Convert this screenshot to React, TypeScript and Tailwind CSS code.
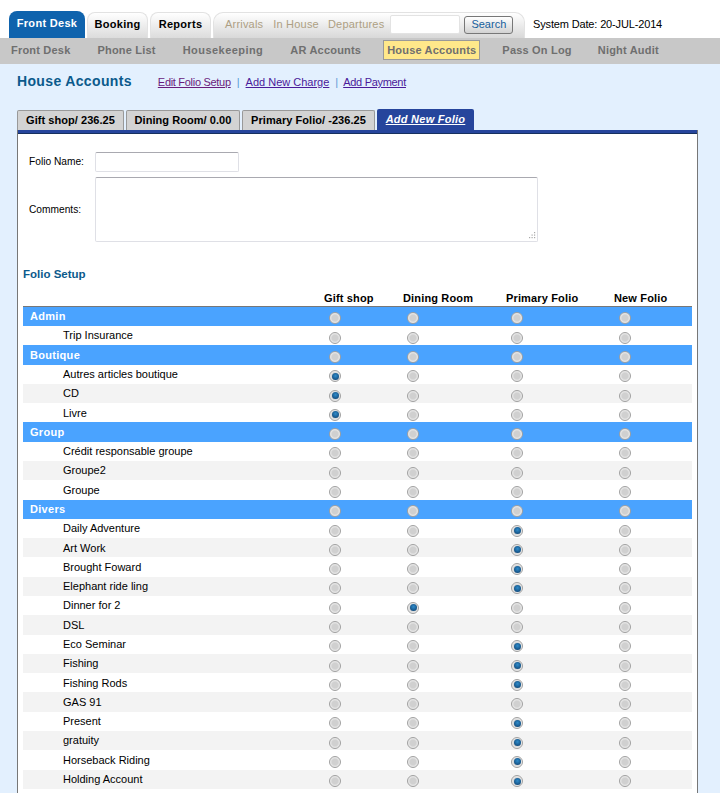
const font = "font-['Liberation_Sans',Arial,sans-serif]";

type Row = { name: string; group?: boolean; pick?: number };

const rows: Row[] = [
  { name: "Admin", group: true },
  { name: "Trip Insurance" },
  { name: "Boutique", group: true },
  { name: "Autres articles boutique", pick: 0 },
  { name: "CD", pick: 0 },
  { name: "Livre", pick: 0 },
  { name: "Group", group: true },
  { name: "Crédit responsable groupe" },
  { name: "Groupe2" },
  { name: "Groupe" },
  { name: "Divers", group: true },
  { name: "Daily Adventure", pick: 2 },
  { name: "Art Work", pick: 2 },
  { name: "Brought Foward", pick: 2 },
  { name: "Elephant ride ling", pick: 2 },
  { name: "Dinner for 2", pick: 1 },
  { name: "DSL" },
  { name: "Eco Seminar", pick: 2 },
  { name: "Fishing", pick: 2 },
  { name: "Fishing Rods", pick: 2 },
  { name: "GAS 91" },
  { name: "Present", pick: 2 },
  { name: "gratuity", pick: 2 },
  { name: "Horseback Riding", pick: 2 },
  { name: "Holding Account", pick: 2 },
];

const cols = "grid grid-cols-[301px_79px_103px_108px_78px]";

const folioTabs = [
  { label: "Gift shop/ 236.25", width: "w-[107px]" },
  { label: "Dining Room/ 0.00", width: "w-[114px]" },
  { label: "Primary Folio/ -236.25", width: "w-[133px]" },
];

function Radio({ on, col }: { on?: boolean; col: number }) {
  return (
    <span
      className={`mt-[4px] flex size-[12px] items-center justify-center rounded-full border border-[#a0a0a0] bg-[radial-gradient(circle,#d0d0d0_40%,#f6f6f6_80%)] ${
        col === 1 ? "ml-[4px]" : "ml-[5px]"
      }`}
    >
      {on && <span className="size-[7px] rounded-full bg-[radial-gradient(circle_at_50%_40%,#2f8ccb,#0a3a68)]" />}
    </span>
  );
}

export default function App() {
  let stripe = 0;
  return (
    <div className={`${font} flex h-[793px] w-[720px] flex-col overflow-hidden bg-white text-[11px] text-black`}>
      {/* Top tabs */}
      <div className="flex h-[38px] shrink-0 items-end pl-[9px]">
        <div className="flex h-[27px] w-[76px] items-center justify-center rounded-t-[8px] bg-[#0f63ad] pb-[2px] font-bold tracking-[0.3px] text-white">
          Front Desk
        </div>
        <div className="ml-[2px] flex h-[26px] w-[61px] items-center justify-center rounded-t-[8px] border border-b-0 border-[#e2e2e2] bg-gradient-to-b from-white to-[#dcdcdc] pb-[2px] font-bold tracking-[0.3px]">
          Booking
        </div>
        <div className="ml-[2px] flex h-[26px] w-[61px] items-center justify-center rounded-t-[8px] border border-b-0 border-[#e2e2e2] bg-gradient-to-b from-white to-[#dcdcdc] pb-[2px] font-bold tracking-[0.3px]">
          Reports
        </div>
        <div className="ml-[2px] flex h-[26px] w-[312px] items-center rounded-t-[10px] border border-b-0 border-[#e2e2e2] bg-gradient-to-b from-white to-[#d8d8d8] pb-[2px] pl-[11px] tracking-[0.2px] text-[#ad9f83]">
          <span>Arrivals</span>
          <span className="ml-[10px]">In House</span>
          <span className="ml-[9px]">Departures</span>
          <span className="ml-[6px] h-[19px] w-[70px] rounded-[2px] border border-[#e3e3e3] bg-white" />
          <span className="ml-[4px] flex h-[18px] w-[49px] items-center justify-center rounded-[3px] border border-[#777] bg-gradient-to-b from-white to-[#d2d2d2] tracking-normal text-[#17609c]">
            Search
          </span>
        </div>
        <div className="ml-[8px] h-[25px] leading-[22px] tracking-[-0.15px]">System Date: 20-JUL-2014</div>
      </div>

      {/* Sub nav */}
      <div className="flex h-[26px] shrink-0 items-center bg-[#c8c8c8] pb-[2px] pl-[11px] font-bold tracking-[0.2px] text-[#6f6f6f]">
        <span>Front Desk</span>
        <span className="ml-[27px]">Phone List</span>
        <span className="ml-[27px] tracking-[0.45px]">Housekeeping</span>
        <span className="ml-[27px]">AR Accounts</span>
        <span className="ml-[22px] border border-[#999] bg-[#ffe88a] px-[3px] py-[1px]">House Accounts</span>
        <span className="ml-[22px]">Pass On Log</span>
        <span className="ml-[26px]">Night Audit</span>
      </div>

      {/* Page body */}
      <div className="flex-1 bg-[#e3f0fe] pl-[17px] pr-[22px]">
        <div className="flex h-[46px] items-start pt-[7px]">
          <h1 className="text-[14px] font-bold tracking-[0.35px] text-[#0b5a8c]">House Accounts</h1>
          <div className="ml-[26px] mt-[3px] flex">
            <a href="#" className="tracking-[-0.3px] text-[#6a1b7c] underline">Edit Folio Setup</a>
            <span className="mx-[6px] text-[#5a9bd5]">|</span>
            <a href="#" className="text-[#4a1a9a] underline">Add New Charge</a>
            <span className="ml-[6px] mr-[5px] text-[#5a9bd5]">|</span>
            <a href="#" className="tracking-[-0.3px] text-[#4a1a9a] underline">Add Payment</a>
          </div>
        </div>

        {/* Folio tabs */}
        <div className="flex h-[20px] items-end">
          {folioTabs.map((t) => (
            <div
              key={t.label}
              className={`${t.width} mr-[2px] flex h-[20px] items-center justify-center rounded-t-[2px] border border-b-0 border-[#999] bg-[#d3d3d3] font-bold tracking-[0.05px]`}
            >
              {t.label}
            </div>
          ))}
          <div className="flex h-[21px] w-[97px] items-center justify-center rounded-t-[2px] bg-[#26459c] font-bold italic tracking-[0.25px] text-white underline">
            Add New Folio
          </div>
        </div>

        {/* Panel */}
        <div className="h-full border-x border-[#777] bg-white">
          <div className="h-[4px] border-b border-[#16305f] bg-[#26459c]" />
          <div className="px-[5px]">
            <div className="flex items-center pl-[6px] pt-[18px]">
              <span className="w-[66px] text-[10.2px]">Folio Name:</span>
              <span className="h-[20px] w-[144px] rounded-[2px] border border-[#dfe0e6] border-t-[#a9a9b0] bg-white" />
            </div>
            <div className="mt-[5px] flex h-[65px] items-center pl-[6px]">
              <span className="w-[66px] text-[10.2px]">Comments:</span>
              <div className="relative h-[65px] w-[443px]">
                <textarea className="block size-full resize-none rounded-[2px] border border-[#dfe0e6] border-t-[#a9a9b0] bg-white outline-none" />
                <svg className="pointer-events-none absolute bottom-[2px] right-[2px]" width="9" height="9" viewBox="0 0 9 9" fill="#a8a8a8">
                  <rect x="7" y="1" width="1.2" height="1.2" />
                  <rect x="4.5" y="3.5" width="1.2" height="1.2" />
                  <rect x="7" y="3.5" width="1.2" height="1.2" />
                  <rect x="2" y="6" width="1.2" height="1.2" />
                  <rect x="4.5" y="6" width="1.2" height="1.2" />
                  <rect x="7" y="6" width="1.2" height="1.2" />
                </svg>
              </div>
            </div>

            <h2 className="mt-[25px] h-[23px] text-[11.5px] font-bold leading-[14px] text-[#0b5a8c]">Folio Setup</h2>

            {/* Matrix */}
            <div className={`${cols} h-[16.8px] items-center border-b border-[#777] font-bold tracking-[0.15px]`}>
              <span />
              <span>Gift shop</span>
              <span>Dining Room</span>
              <span>Primary Folio</span>
              <span>New Folio</span>
            </div>
            {rows.map((r) => {
              const striped = !r.group && stripe++ % 2 === 1;
              if (r.group) stripe = 0;
              return (
                <div
                  key={r.name}
                  className={`${cols} h-[19.29px] items-center ${
                    r.group ? "bg-[#4aa3ff] font-bold tracking-[0.3px] text-white" : striped ? "bg-[#f3f3f3]" : "bg-white"
                  }`}
                >
                  <span className={r.group ? "pl-[7px]" : "pl-[40px]"}>{r.name}</span>
                  {[0, 1, 2, 3].map((c) => (
                    <Radio key={c} col={c} on={r.pick === c} />
                  ))}
                </div>
              );
            })}
          </div>
        </div>
      </div>
    </div>
  );
}
